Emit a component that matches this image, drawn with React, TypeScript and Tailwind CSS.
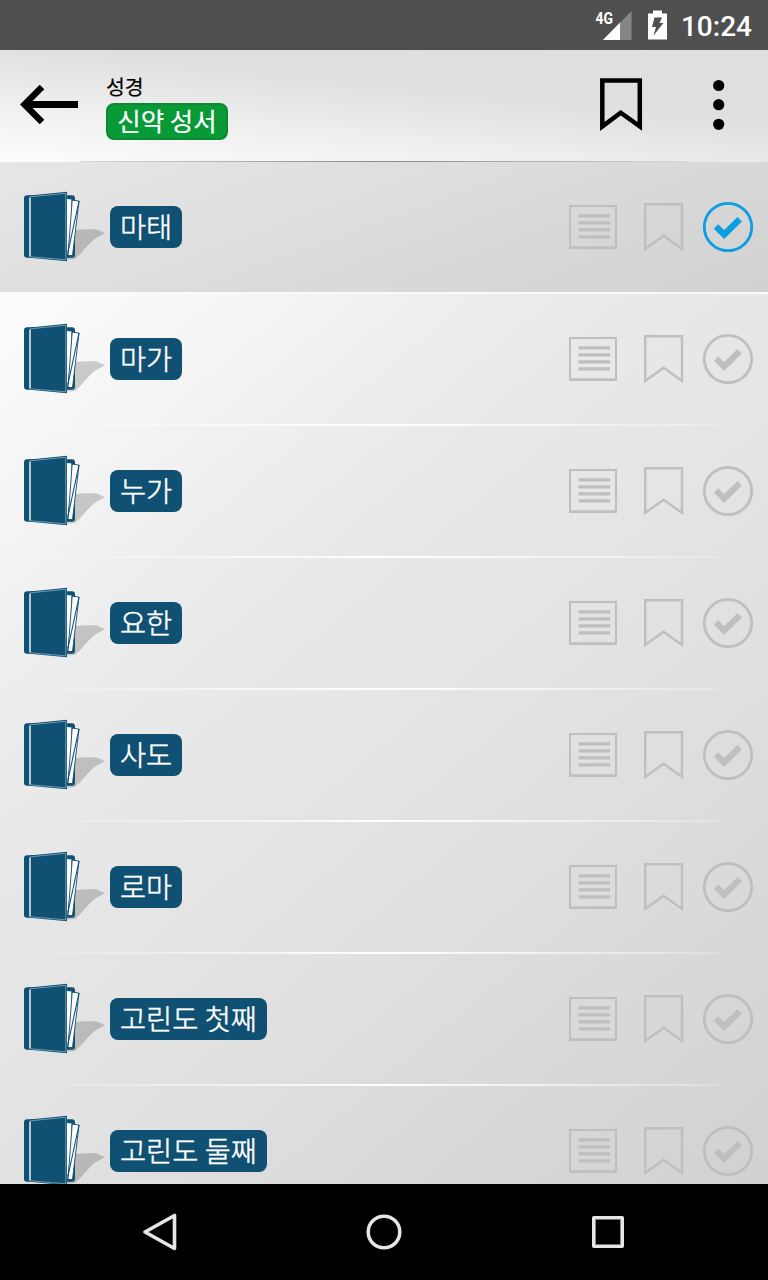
import React from 'react';

const books = [
  { name: '마태', read: true },
  { name: '마가', read: false },
  { name: '누가', read: false },
  { name: '요한', read: false },
  { name: '사도', read: false },
  { name: '로마', read: false },
  { name: '고린도 첫째', read: false },
  { name: '고린도 둘째', read: false },
];

const StatusBar = () => (
  <div className="flex h-[50px] shrink-0 items-center justify-end bg-[#4f4f4f] pr-4 text-white">
    <svg width="38" height="32" viewBox="0 0 38 32" className="mr-[16px]">
      <path d="M37.500 2V31H9z" fill="#858585" />
      <path d="M26 13.500V31H9z" fill="#fff" />
      <text x="1.500" y="15" fontFamily="Roboto" fontSize="16.500" fontWeight="700" textLength="17.500" lengthAdjust="spacingAndGlyphs" fill="#fff">4G</text>
    </svg>
    <svg width="20" height="30" viewBox="0 0 20 30" className="mr-[13px]">
      <path d="M5 0.500H14V3.500H19V29.500H0V3.500H5z" fill="#fff" />
      <path d="M6.500 7.500H14L11.500 13H15.500L5.500 25.500L8 17H4z" fill="#4f4f4f" />
    </svg>
    <span className="pt-[4px] font-[Roboto,sans-serif] text-[28px] font-medium leading-none">10:24</span>
  </div>
);

const Header = () => (
  <header className="flex h-[112px] shrink-0 flex-col bg-[linear-gradient(186deg,#dedede_0%,#dfdfdf_38%,#ededed_65%,#fdfdfd_100%)]">
    <div className="flex h-[111px] items-start">
      <button className="ml-5 mt-[34px]">
        <svg width="58" height="40" viewBox="0 0 58 40" fill="none" stroke="#000">
          <path d="M58 20.500H4" strokeWidth="7" />
          <path d="M22 3L4.500 20.500L22 38" strokeWidth="6.500" />
        </svg>
      </button>
      <div className="ml-7 mt-[25px] flex flex-col items-start font-['Noto_Sans_CJK_KR',sans-serif]">
        <div className="h-7 text-[20.500px] leading-[22px] text-black [-webkit-text-stroke:0.200px_#000]">성경</div>
        <div className="flex h-[37px] w-[122px] items-center justify-center whitespace-nowrap rounded-[8px] border-2 border-[#0a8a31] bg-[#079a36] pb-[3px] text-[25.500px] leading-none text-white [-webkit-text-stroke:0.200px_#fff]">
          신약 성서
        </div>
      </div>
      <div className="ml-auto mr-[43px] flex items-start gap-[70px]">
        <svg width="44" height="54" viewBox="0 0 44 54" className="mt-7">
          <path d="M3.300 2.500H40.800V48.400L21.700 34.700L3.300 48.400z" fill="none" stroke="#000" strokeWidth="4.500" />
        </svg>
        <svg width="12" height="52" viewBox="0 0 12 52" className="mt-[29px]">
          <circle cx="5.700" cy="6.500" r="5.600" />
          <circle cx="5.700" cy="25.700" r="5.600" />
          <circle cx="5.700" cy="45.300" r="5.600" />
        </svg>
      </div>
    </div>
    <div className="mx-20 h-px bg-[linear-gradient(90deg,#d8d8d8,#8a8a8a_50%,#d8d8d8)]" />
  </header>
);

const BookIcon = () => (
  <svg width="84" height="74" viewBox="0 0 84 74">
    <path d="M50 40.500L62 39.200H74L77 40.500L83 43.300L74 48C67 53 60 63 53 69L44 69.500z" fill="#000" fillOpacity="0.180" />
    <rect x="2" y="5.300" width="51" height="62.500" rx="3" fill="#105073" />
    <path d="M45 9L49.500 9.500L48.500 40L45 66z" fill="#fff" />
    <path d="M50.200 10.200L57 11L50.500 65.500H46z" fill="#fff" stroke="#105073" strokeWidth="0.900" />
    <path d="M57 11L46 62" stroke="#105073" strokeWidth="1.100" />
    <path d="M7.500 5.500L45 1.800V71.300L7.500 67.800z" fill="#105073" />
    <path d="M8 6.800L43.800 3.300V69.800L8 66.800" fill="none" stroke="#a8cbdc" strokeWidth="0.600" />
    <path d="M8 7.500V66.500" stroke="#e3f0f6" strokeWidth="1.500" />
  </svg>
);

const RowActions = ({ read }: { read: boolean }) => (
  <div className="ml-auto mr-[14px] mt-[39px] flex items-start text-[#bfbfbf]">
    <svg width="48" height="52" viewBox="0 0 48 52" className="mr-[27px]" fill="none" stroke="currentColor">
      <rect x="1" y="5" width="46" height="42" strokeWidth="2.100" />
      <path d="M0 46.600H48" strokeWidth="2.800" />
      <path d="M9.500 14.800H41M9.500 21.800H41M9.500 28.800H41M9.500 35.900H41" strokeWidth="3.300" />
    </svg>
    <svg width="40" height="52" viewBox="0 0 40 52" className="mr-[18px]" fill="none" stroke="currentColor">
      <path d="M1.200 3.200H38V48L19.600 34.700L1.200 48z" strokeWidth="2.400" />
    </svg>
    <svg width="52" height="52" viewBox="0 0 52 52" className={read ? 'text-[#0a9ee2]' : ''} fill="none" stroke="currentColor">
      <circle cx="26" cy="26" r="23.700" strokeWidth="2.800" />
      <path d="M14 25.500L22.200 33.500L37.700 18.200" strokeWidth="6.300" />
    </svg>
  </div>
);

const BookRow = ({ name, read }: { name: string; read: boolean }) => (
  <div className={`flex h-[132px] shrink-0 flex-col ${read ? 'bg-[linear-gradient(160deg,#e6e6e6_0%,#dddddd_45%,#d1d1d1_100%)]' : ''}`}>
    <div className="flex h-[130px] items-start">
      <div className="ml-[22px] mt-7">
        <BookIcon />
      </div>
      <div className="ml-1 mt-11 flex h-[42px] items-center whitespace-nowrap rounded-[8px] bg-[#105073] px-[10px] pb-[2px] font-['Noto_Sans_CJK_KR',sans-serif] text-[28.400px] font-light leading-none text-white [-webkit-text-stroke:0.500px_#fff]">
        {name}
      </div>
      <RowActions read={read} />
    </div>
    <div
      className={
        read
          ? 'h-[2px] bg-[#fafafa]'
          : 'mx-[50px] h-[2px] bg-[linear-gradient(90deg,rgba(255,255,255,0.1),#fff_50%,rgba(255,255,255,0.2))]'
      }
    />
  </div>
);

const NavBar = () => (
  <nav className="flex h-24 shrink-0 items-center justify-between bg-black px-[140px]">
    <svg width="40" height="44" viewBox="0 0 40 44" fill="none" stroke="#e6e6e6" strokeWidth="3.600" strokeLinejoin="round">
      <path d="M34.500 5.500V38.500L5 22z" />
    </svg>
    <svg width="40" height="44" viewBox="0 0 40 44" fill="none" stroke="#e6e6e6" strokeWidth="3.500">
      <circle cx="20" cy="22" r="15.800" />
    </svg>
    <svg width="40" height="44" viewBox="0 0 40 44" fill="none" stroke="#e6e6e6" strokeWidth="3.600" strokeLinejoin="round">
      <rect x="5.800" y="7.800" width="28.400" height="28.400" />
    </svg>
  </nav>
);

export default function App() {
  return (
    <div className="flex h-[1280px] w-[768px] flex-col overflow-hidden bg-black">
      <StatusBar />
      <Header />
      <main className="flex h-[1022px] shrink-0 flex-col overflow-hidden bg-[linear-gradient(140deg,#ffffff_4%,#eaeaea_38%,#e0e0e0_66%,#d1d1d1_100%)]">
        {books.map((book) => (
          <BookRow key={book.name} name={book.name} read={book.read} />
        ))}
      </main>
      <NavBar />
    </div>
  );
}
